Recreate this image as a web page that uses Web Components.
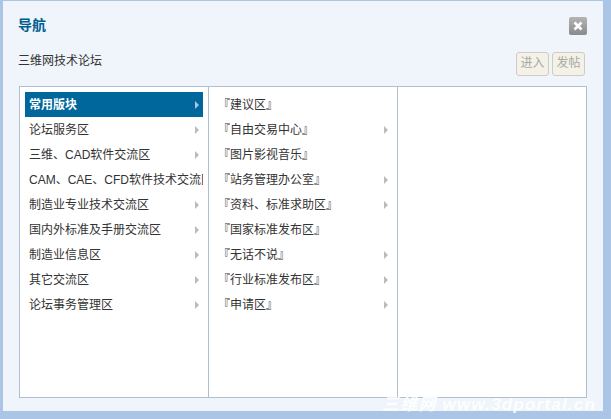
<!DOCTYPE html>
<html lang="zh">
<head>
<meta charset="utf-8">
<title>导航</title>
<style>
    html, body { margin: 0; height: 100%; overflow: hidden; }
    body { background: #abc5e6; font: 12px "Liberation Sans", "Noto Sans CJK SC", sans-serif; color: #333; }
</style>
</head>
<body>

<nav-dialog heading="导航" forum="三维网技术论坛">
    <nav-column>
        <nav-item active arrow>常用版块</nav-item>
        <nav-item arrow>论坛服务区</nav-item>
        <nav-item arrow>三维、CAD软件交流区</nav-item>
        <nav-item>CAM、CAE、CFD软件技术交流区</nav-item>
        <nav-item arrow>制造业专业技术交流区</nav-item>
        <nav-item arrow>国内外标准及手册交流区</nav-item>
        <nav-item arrow>制造业信息区</nav-item>
        <nav-item arrow>其它交流区</nav-item>
        <nav-item arrow>论坛事务管理区</nav-item>
    </nav-column>
    <nav-column>
        <nav-item>『建议区』</nav-item>
        <nav-item arrow>『自由交易中心』</nav-item>
        <nav-item>『图片影视音乐』</nav-item>
        <nav-item arrow>『站务管理办公室』</nav-item>
        <nav-item arrow>『资料、标准求助区』</nav-item>
        <nav-item>『国家标准发布区』</nav-item>
        <nav-item arrow>『无话不说』</nav-item>
        <nav-item arrow>『行业标准发布区』</nav-item>
        <nav-item arrow>『申请区』</nav-item>
    </nav-column>
    <nav-column></nav-column>
</nav-dialog>

<script>
class NavDialog extends HTMLElement {
    constructor(){
        super();
        this.attachShadow({mode: 'open'});
        this.shadowRoot.innerHTML = `
        <style>
            :host {
                display: block;
                position: relative;
                box-sizing: border-box;
                width: 600px;
                height: 410px;
                margin: 1px 0 0 3px;
                padding: 0 16px;
                background: #eff5fb;
            }
            header {
                display: flex;
                justify-content: space-between;
                align-items: center;
                height: 50px;
                padding-top: 1px;
                box-sizing: border-box;
            }
            h3 {
                margin: 0 0 6px -1px;
                font-size: 14px;
                font-weight: bold;
                color: #005e8f;
            }
            .close {
                width: 18px;
                height: 18px;
                margin-bottom: 2px;
                border-radius: 2px;
                background: linear-gradient(#b4b4b4, #8a8a8a);
                display: flex;
                align-items: center;
                justify-content: center;
            }
            .bar {
                display: flex;
                justify-content: space-between;
                align-items: center;
                height: 25px;
                margin-bottom: 10px;
            }
            .forum { color: #333; position: relative; top: -4px; margin-left: -1px; }
            .btns { display: flex; gap: 3px; margin-right: 2px; }
            .btn {
                box-sizing: border-box;
                width: 33px;
                height: 24px;
                line-height: 21px;
                text-align: center;
                color: #a9a9a0;
                background: #f3f1e8;
                border: 1px solid #cdcdc2;
                border-radius: 3px;
            }
            .box {
                display: flex;
                height: 312px;
                box-sizing: border-box;
                background: #fff;
                border: 1px solid #aebfd0;
            }
            .mark {
                position: absolute;
                right: 7px;
                bottom: 0;
                font: italic bold 17px/12px "Liberation Sans", "Noto Sans CJK SC", sans-serif;
                letter-spacing: 1.2px;
                color: #fff;
                opacity: .9;
                white-space: nowrap;
            }
        </style>
        <header>
            <h3></h3>
            <div class="close">
                <svg width="10" height="10" viewBox="0 0 10 10"><path d="M1.5 1.5 8.5 8.5M8.5 1.5 1.5 8.5" stroke="#fff" stroke-width="2.6"/></svg>
            </div>
        </header>
        <div class="bar">
            <span class="forum"></span>
            <div class="btns"><span class="btn">进入</span><span class="btn">发帖</span></div>
        </div>
        <div class="box"><slot></slot></div>
        <span class="mark">三维网 www.3dportal.cn</span>`;
    }

    connectedCallback(){
        this.shadowRoot.querySelector('h3').textContent = this.getAttribute('heading');
        this.shadowRoot.querySelector('.forum').textContent = this.getAttribute('forum');
    }
}

class NavColumn extends HTMLElement {
    constructor(){
        super();
        this.attachShadow({mode: 'open'});
        this.shadowRoot.innerHTML = `
        <style>
            :host {
                display: block;
                box-sizing: border-box;
                width: 189px;
                padding: 5px 5px 0;
                border-right: 1px solid #aebfd0;
            }
            :host(:last-child) { border-right: 0; }
        </style>
        <slot></slot>`;
    }
}

class NavItem extends HTMLElement {
    constructor(){
        super();
        this.attachShadow({mode: 'open'});
        this.shadowRoot.innerHTML = `
        <style>
            :host {
                display: flex;
                align-items: center;
                height: 25px;
                width: 178px;
                color: #333;
                white-space: nowrap;
                overflow: hidden;
            }
            :host([active]) {
                background: #00679d;
                color: #fff;
                font-weight: bold;
            }
            .label { flex: 1; padding: 0 0 2px 4px; overflow: hidden; }
            .arrow {
                display: none;
                flex: none;
                width: 0;
                height: 0;
                margin-right: 4px;
                border-left: 4px solid #bbb;
                border-top: 4px solid transparent;
                border-bottom: 4px solid transparent;
            }
            :host([arrow]) .arrow { display: block; }
            :host([active]) .arrow { border-left-color: #a8c6dc; }
        </style>
        <span class="label"><slot></slot></span>
        <span class="arrow"></span>`;
    }
}

customElements.define('nav-dialog', NavDialog);
customElements.define('nav-column', NavColumn);
customElements.define('nav-item', NavItem);
</script>
</body>
</html>
